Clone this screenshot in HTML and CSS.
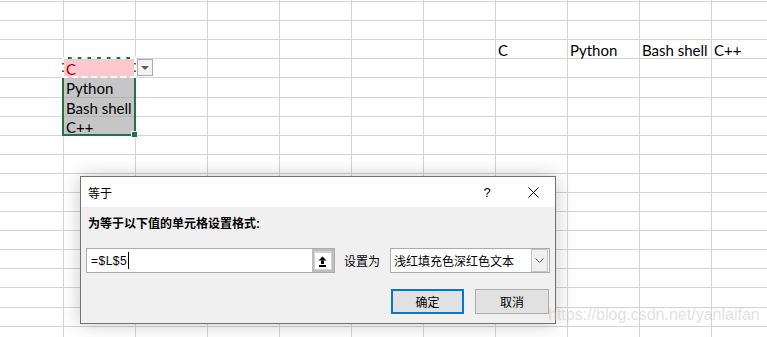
FILE: index.html
```html
<!DOCTYPE html>
<html lang="zh-CN">
<head>
<meta charset="utf-8">
<title>Excel 等于</title>
<link rel="stylesheet" href="styles.css">
</head>
<body>
<div class="sheet">
  <div class="row r-top"></div>
  <div class="row"></div>
  <div class="row"></div>
  <div class="row">
    <span class="cell col8">C</span>
    <span class="cell col9">Python</span>
    <span class="cell col10">Bash shell</span>
    <span class="cell col11">C++</span>
  </div>
  <div class="row">
    <span class="cell col2 pink">C</span>
    <span class="dd col3"><i class="tri"></i></span>
  </div>
  <div class="row r-tall"><span class="cell col2 sel">Python</span></div>
  <div class="row"><span class="cell col2 sel">Bash shell</span></div>
  <div class="row"><span class="cell col2 sel last">C++</span></div>
  <div class="row"></div>
  <div class="row"></div>
  <div class="row"></div>
  <div class="row"></div>
  <div class="row"></div>
  <div class="row"></div>
  <div class="row"></div>
  <div class="row"></div>
  <div class="row r-tall"></div>
  <div class="row"></div>
  <div class="row"></div>

  <div class="selbox"><i class="marquee"></i><i class="handle"></i></div>

  <div class="dialog">
    <div class="titlebar">
      <span class="title">等于</span>
      <span class="help">?</span>
      <svg class="close" width="11" height="11" viewBox="0 0 11 11"><path d="M0.5 0.5 L10.5 10.5 M10.5 0.5 L0.5 10.5" stroke="#000" stroke-width="1" fill="none"/></svg>
    </div>
    <div class="body">
      <div class="label">为等于以下值的单元格设置格式:</div>
      <div class="fields">
        <div class="refinput">
          <span class="val">=$L$5</span><span class="caret"></span>
          <span class="collapse"><span class="inner">
            <svg width="16" height="16" viewBox="0 0 16 16"><polygon points="7.5,3.5 3.5,7.5 11.5,7.5" fill="#000"/><rect x="6" y="7.5" width="3" height="3.5" fill="#000"/><rect x="4" y="12" width="7" height="2" fill="#000"/></svg>
          </span></span>
        </div>
        <span class="setlabel">设置为</span>
        <div class="select">
          <span class="seltext">浅红填充色深红色文本</span>
          <span class="arrow"><svg width="9" height="6" viewBox="0 0 9 6"><path d="M0.5 0.5 L4.5 4.5 L8.5 0.5" stroke="#555" stroke-width="1" fill="none"/></svg></span>
        </div>
      </div>
      <div class="buttons">
        <span class="btn primary">确定</span>
        <span class="btn">取消</span>
      </div>
    </div>
  </div>

  <div class="watermark">https://blog.csdn.net/yanlaifan</div>
</div>
</body>
</html>
```
FILE: styles.css
```css
html, body {
  margin: 0;
  padding: 0;
  background: #fff;
}
body {
  width: 767px;
  height: 337px;
  overflow: hidden;
}
.sheet {
  position: relative;
  width: 767px;
  height: 337px;
  overflow: hidden;
  background: repeating-linear-gradient(to right, transparent 0 63px, #d4d4d4 63px 64px, transparent 64px 72px);
  font-family: Lato, "Liberation Sans", sans-serif;
  font-size: 15px;
  color: #000;
}
.row {
  display: grid;
  grid-template-columns: 64px repeat(10, 72px);
  height: 19px;
  box-sizing: border-box;
  border-bottom: 1px solid #d4d4d4;
}
.row.r-top { height: 2px; }
.row.r-tall { height: 20px; }
.cell {
  padding: 1px 0 0 2px;
  line-height: 18px;
  white-space: nowrap;
}
.col2 { grid-column: 2; }
.col3 { grid-column: 3; }
.col8 { grid-column: 8; }
.col9 { grid-column: 9; }
.col10 { grid-column: 10; }
.col11 { grid-column: 11; }
.pink {
  background: #ffc7ce;
  color: #9c0006;
}
.sel {
  background: #c6c6c6;
  margin-bottom: -1px;
  background-image: linear-gradient(to top, #b4b4b4 1px, transparent 1px);
}
.sel.last { background-image: none; }
.dd {
  align-self: start;
  justify-self: start;
  margin-left: 1px;
  width: 16px;
  height: 17px;
  box-sizing: border-box;
  border: 1px solid #ababab;
  background: #f3f3f3;
  display: flex;
  align-items: center;
  justify-content: center;
}
.tri {
  width: 0;
  height: 0;
  border-left: 4px solid transparent;
  border-right: 4px solid transparent;
  border-top: 4px solid #5f5f5f;
}
.selbox {
  position: absolute;
  left: 62px;
  top: 57px;
  width: 74px;
  height: 79px;
  box-sizing: border-box;
  border: 2px solid #217346;
}
.marquee {
  position: absolute;
  left: -2px;
  top: -2px;
  width: 74px;
  height: 21px;
  box-sizing: border-box;
  border: 2px dashed #fff;
}
.handle {
  position: absolute;
  right: -4px;
  bottom: -4px;
  width: 5px;
  height: 5px;
  background: #217346;
  border: 1px solid #fff;
}

/* dialog */
.dialog {
  position: absolute;
  left: 80px;
  top: 176px;
  width: 476px;
  height: 148px;
  box-sizing: border-box;
  border: 1px solid #727272;
  background: #f0f0f0;
  box-shadow: 0 0 18px rgba(0, 0, 0, 0.22);
  font-family: "Liberation Sans", "Noto Sans CJK SC", sans-serif;
  font-size: 12px;
  color: #000;
  display: flex;
  flex-direction: column;
}
.titlebar {
  height: 30px;
  background: #fff;
  display: flex;
  align-items: center;
  padding-left: 7px;
}
.title { flex: 1; }
.help {
  width: 14px;
  text-align: center;
  font-size: 13px;
  margin-right: 34px;
}
.close { margin-right: 16px; }
.body {
  padding: 9px 5px 0 5px;
}
.label {
  font-weight: bold;
  line-height: 16px;
  padding-left: 2px;
}
.fields {
  margin-top: 16px;
  display: flex;
  align-items: center;
  height: 25px;
}
.refinput {
  width: 249px;
  height: 25px;
  box-sizing: border-box;
  border: 1px solid #acacac;
  background: #fff;
  display: flex;
  align-items: center;
}
.val {
  padding-left: 4px;
  letter-spacing: 0.5px;
}
.caret {
  width: 1px;
  height: 17px;
  background: #000;
  margin-left: 1px;
}
.collapse {
  margin-left: auto;
  width: 22px;
  height: 23px;
  box-sizing: border-box;
  background: #d2d2d2;
  border: 2px solid #bdbdbd;
  display: flex;
  align-items: center;
  justify-content: center;
}
.inner {
  width: 16px;
  height: 16px;
  background: #fff;
  display: flex;
}
.setlabel {
  margin-left: 9px;
  margin-right: 10px;
}
.select {
  width: 160px;
  height: 25px;
  box-sizing: border-box;
  border: 1px solid #acacac;
  background: #fff;
  display: flex;
  align-items: center;
  margin-right: -1px;
}
.seltext {
  flex: 1;
  padding-left: 3px;
}
.arrow {
  width: 17px;
  height: 23px;
  box-sizing: border-box;
  border: 1px solid #c4c4c4;
  background: #f0f0f0;
  margin-right: 1px;
  display: flex;
  align-items: center;
  justify-content: center;
}
.buttons {
  margin-top: 16px;
  display: flex;
  justify-content: flex-end;
  gap: 11px;
  padding-right: 1px;
}
.btn {
  width: 74px;
  height: 25px;
  box-sizing: border-box;
  border: 1px solid #adadad;
  background: #e1e1e1;
  display: flex;
  align-items: center;
  justify-content: center;
}
.btn.primary {
  width: 73px;
  border: 2px solid #0078d7;
}
.watermark {
  position: absolute;
  left: 548px;
  top: 306px;
  font-family: "Liberation Sans", sans-serif;
  font-size: 16px;
  color: rgba(200, 200, 200, 0.55);
  white-space: nowrap;
}
```
